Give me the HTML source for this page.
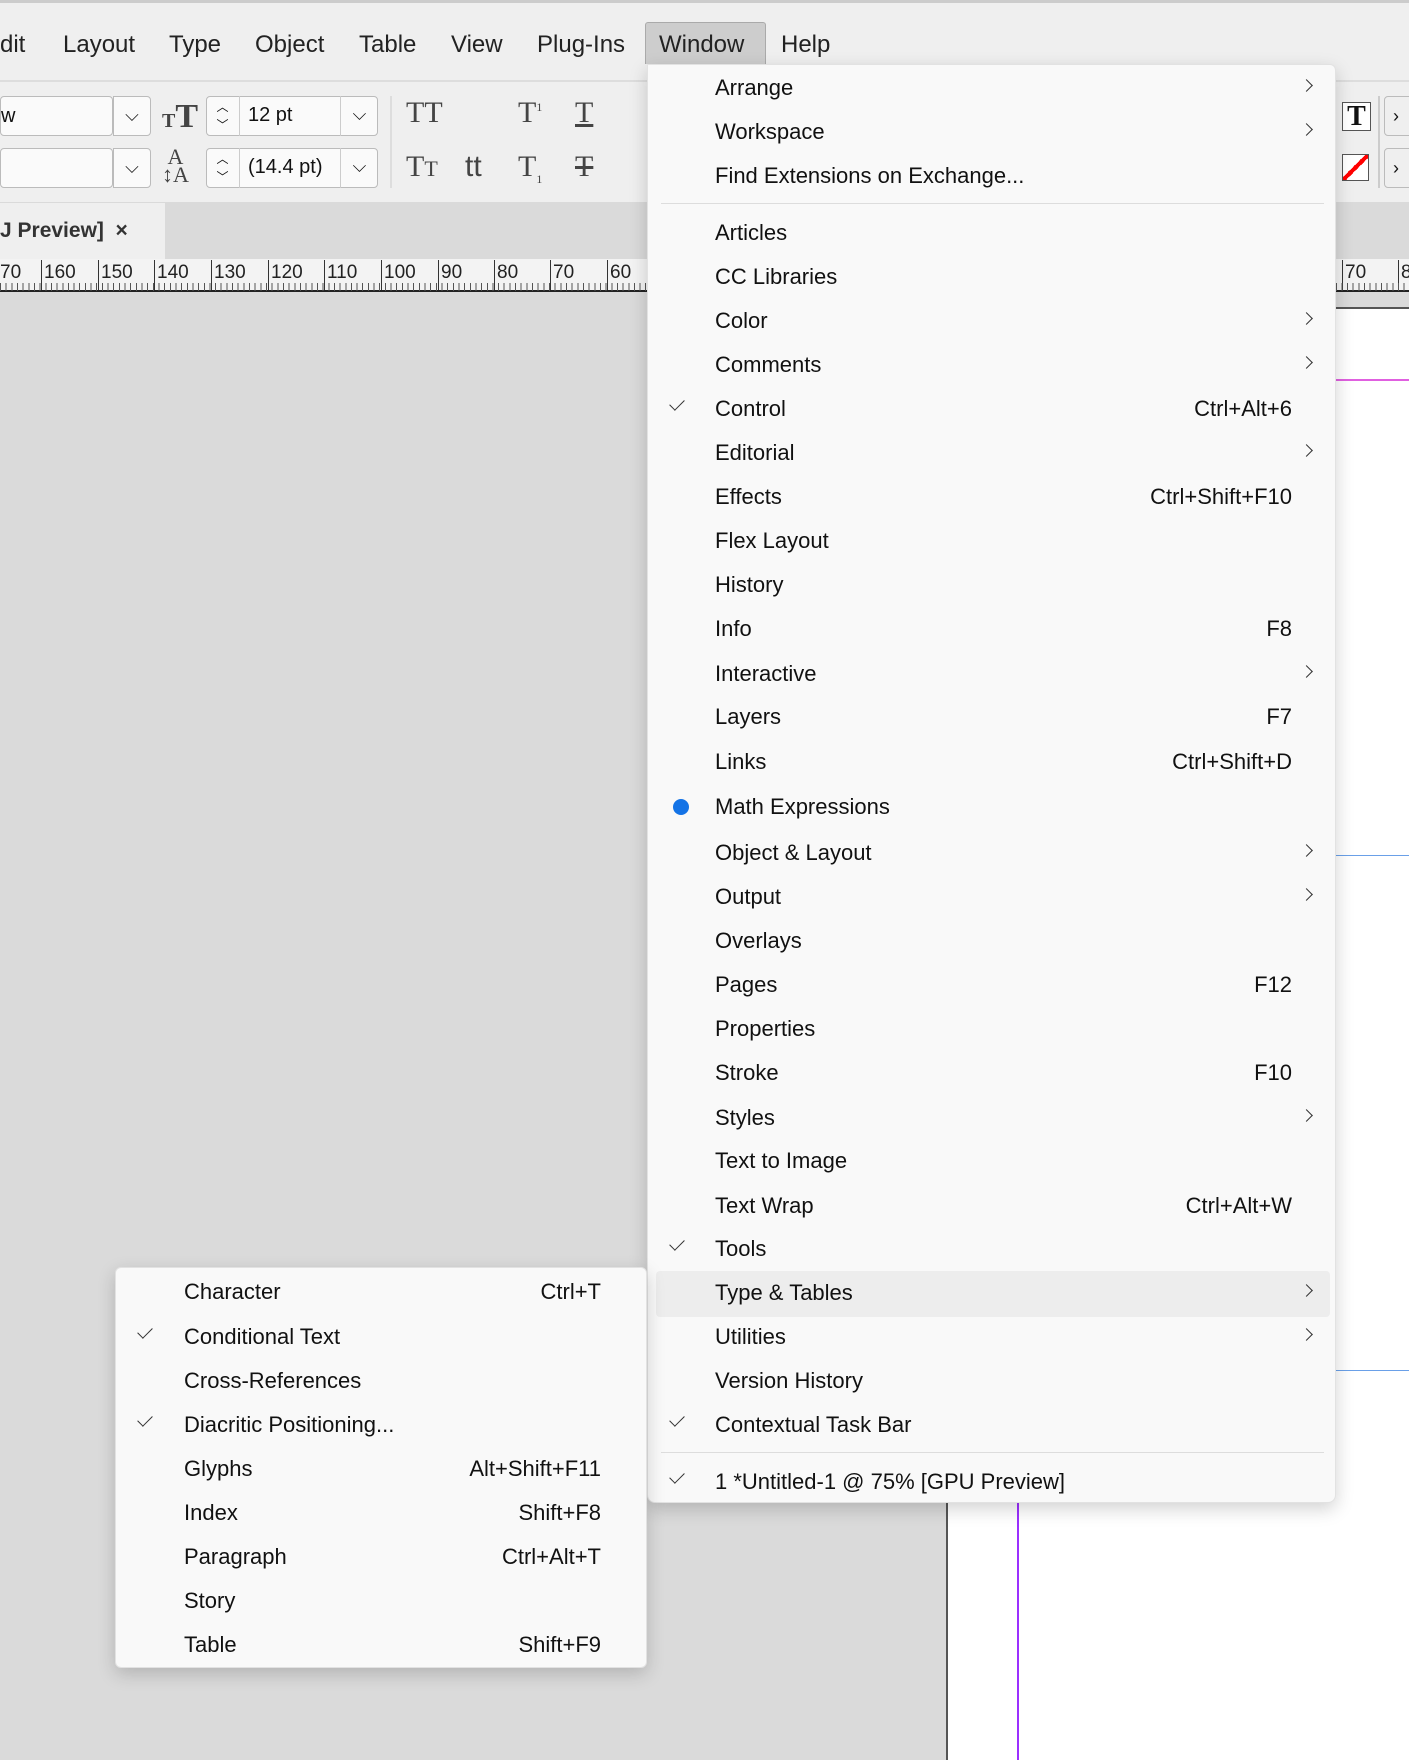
<!DOCTYPE html>
<html><head><meta charset="utf-8"><style>
*{margin:0;padding:0;box-sizing:border-box}
body{width:1409px;height:1749px;position:relative;overflow:hidden;background:#dadada;font-family:"Segoe UI","Liberation Sans",sans-serif;color:#111}
.a{position:absolute}
.mb{font-size:24px;top:31px;color:#222}
.it{position:absolute;left:0;right:0;height:40px;line-height:40px;font-size:22px}
.it .t{position:absolute;left:67px}
.it .s{position:absolute;right:43px}
.it .c{position:absolute;right:24px;top:13px;width:9px;height:9px;border-right:1.6px solid #333;border-top:1.6px solid #333;transform:rotate(45deg)}
.it .k{position:absolute;left:22px;top:10px;width:14px;height:8px;border-left:1.5px solid #333;border-bottom:1.5px solid #333;transform:rotate(-45deg)}
.sub .it .t{left:68px}
.sub .it .s{right:45px}
.sub .it .k{left:22px}
.rn{position:absolute;top:0;font-size:19px;color:#222;border-left:1px solid #333;padding-left:2px;height:30px;line-height:26px}
</style></head><body>
<!-- menubar -->
<div class="a" style="left:0;top:0;width:1409px;height:82px;background:#efefef;border-top:3px solid #ccc"></div>
<div class="a" style="left:645px;top:22px;width:121px;height:42px;background:#cdcdcd;border:1px solid #aaa;border-bottom:none;border-radius:3px 3px 0 0"></div>
<div class="a mb" style="left:0">dit</div>
<div class="a mb" style="left:63px">Layout</div>
<div class="a mb" style="left:169px">Type</div>
<div class="a mb" style="left:255px">Object</div>
<div class="a mb" style="left:359px">Table</div>
<div class="a mb" style="left:451px">View</div>
<div class="a mb" style="left:537px">Plug-Ins</div>
<div class="a mb" style="left:659px">Window</div>
<div class="a mb" style="left:781px">Help</div>
<!-- toolbar -->
<div class="a" style="left:0;top:80px;width:1409px;height:122px;background:#efefef;border-top:2px solid #ddd"></div>
<div class="a" style="left:0;top:96px;width:113px;height:40px;background:#fafafa;border:1px solid #bbb;border-radius:4px;font-size:20px;line-height:38px">w</div>
<div class="a" style="left:113px;top:96px;width:38px;height:40px;border:1px solid #bbb;border-radius:0 4px 4px 0;text-align:center;line-height:36px;font-size:18px;background:#fafafa">⌵</div>
<div class="a" style="left:0;top:148px;width:113px;height:40px;background:#fafafa;border:1px solid #bbb;border-radius:4px"></div>
<div class="a" style="left:113px;top:148px;width:38px;height:40px;border:1px solid #bbb;border-radius:0 4px 4px 0;text-align:center;line-height:36px;font-size:18px;background:#fafafa">⌵</div>
<div class="a" style="left:162px;top:98px;font-family:'Liberation Serif',serif;font-weight:bold;font-size:34px;color:#444"><span style="font-size:20px">T</span>T</div>
<div class="a" style="left:162px;top:148px;font-family:'Liberation Serif',serif;font-size:22px;color:#444;line-height:18px">&nbsp;A<br>↕A</div>
<div class="a" style="left:206px;top:96px;width:172px;height:40px;background:#fafafa;border:1px solid #bbb;border-radius:4px"></div>
<div class="a" style="left:206px;top:96px;width:34px;height:40px;border-right:1px solid #ccc;font-size:12px;text-align:center;line-height:18px;padding-top:2px">︿<br>﹀</div>
<div class="a" style="left:248px;top:104px;font-size:20px">12 pt</div>
<div class="a" style="left:340px;top:96px;width:38px;height:40px;border-left:1px solid #ccc;text-align:center;line-height:36px;font-size:18px">⌵</div>
<div class="a" style="left:206px;top:148px;width:172px;height:40px;background:#fafafa;border:1px solid #bbb;border-radius:4px"></div>
<div class="a" style="left:206px;top:148px;width:34px;height:40px;border-right:1px solid #ccc;font-size:12px;text-align:center;line-height:18px;padding-top:2px">︿<br>﹀</div>
<div class="a" style="left:248px;top:156px;font-size:20px">(14.4 pt)</div>
<div class="a" style="left:340px;top:148px;width:38px;height:40px;border-left:1px solid #ccc;text-align:center;line-height:36px;font-size:18px">⌵</div>
<div class="a" style="left:390px;top:96px;width:2px;height:92px;background:#ddd"></div>
<div class="a" style="left:406px;top:96px;font-family:'Liberation Serif',serif;font-size:30px;color:#444">TT</div>
<div class="a" style="left:518px;top:96px;font-family:'Liberation Serif',serif;font-size:30px;color:#444">T<sup style="font-size:12px">1</sup></div>
<div class="a" style="left:575px;top:96px;font-family:'Liberation Serif',serif;font-size:30px;color:#444;text-decoration:underline">T</div>
<div class="a" style="left:406px;top:150px;font-family:'Liberation Serif',serif;font-size:30px;color:#444">T<span style="font-size:22px">T</span></div>
<div class="a" style="left:465px;top:150px;font-family:'Liberation Sans',sans-serif;font-size:30px;color:#444">tt</div>
<div class="a" style="left:518px;top:150px;font-family:'Liberation Serif',serif;font-size:30px;color:#444">T<sub style="font-size:12px">1</sub></div>
<div class="a" style="left:575px;top:150px;font-family:'Liberation Serif',serif;font-size:30px;color:#444;text-decoration:line-through">T</div>
<div class="a" style="left:1342px;top:102px;width:29px;height:29px;border:1px solid #555;background:#fff;font-family:'Liberation Serif',serif;font-weight:900;font-size:28px;line-height:28px;text-align:center">T</div>
<div class="a" style="left:1342px;top:154px;width:27px;height:27px;border:1px solid #555;background:linear-gradient(135deg,#fff 44%,#f00 44%,#f00 56%,#fff 56%)"></div>
<div class="a" style="left:1378px;top:96px;width:2px;height:92px;background:#ccc"></div>
<div class="a" style="left:1384px;top:96px;width:30px;height:40px;border:1px solid #bbb;border-radius:4px;font-size:18px;line-height:38px;padding-left:8px">›</div>
<div class="a" style="left:1384px;top:148px;width:30px;height:40px;border:1px solid #bbb;border-radius:4px;font-size:18px;line-height:38px;padding-left:8px">›</div>
<!-- tab row -->
<div class="a" style="left:0;top:203px;width:1409px;height:56px;background:#dadada"></div>
<div class="a" style="left:0;top:203px;width:165px;height:56px;background:#efefef;font-size:21px;font-weight:bold;color:#333;line-height:56px">J Preview]&nbsp;&nbsp;×</div>
<!-- ruler -->
<div class="a" style="left:0;top:259px;width:1409px;height:33px;background:#f3f3f3;border-bottom:2px solid #222"></div>
<div class="a" style="left:0;top:260px;width:1409px;height:30px">
<div class="rn" style="left:-2px;border:none">70</div>
<div class="rn" style="left:41px">160</div>
<div class="rn" style="left:98px">150</div>
<div class="rn" style="left:154px">140</div>
<div class="rn" style="left:211px">130</div>
<div class="rn" style="left:268px">120</div>
<div class="rn" style="left:324px">110</div>
<div class="rn" style="left:381px">100</div>
<div class="rn" style="left:438px">90</div>
<div class="rn" style="left:494px">80</div>
<div class="rn" style="left:550px">70</div>
<div class="rn" style="left:607px">60</div>
<div class="rn" style="left:1342px">70</div>
<div class="rn" style="left:1398px">8</div>
</div>
<div class="a" style="left:0;top:283px;width:1409px;height:8px;background:repeating-linear-gradient(90deg,#555 0 1px,transparent 1px 5.66px)"></div>
<!-- page -->
<div class="a" style="left:1336px;top:307px;width:80px;height:1200px;background:#fff;border-top:2px solid #555"></div>
<div class="a" style="left:1336px;top:379px;width:80px;height:2px;background:#e060e0"></div>
<div class="a" style="left:1336px;top:855px;width:80px;height:1px;background:#6aa0e8"></div>
<div class="a" style="left:1336px;top:1370px;width:80px;height:1px;background:#6aa0e8"></div>
<div class="a" style="left:946px;top:1480px;width:470px;height:280px;background:#fff;border-left:2px solid #555"></div>
<div class="a" style="left:1017px;top:1480px;width:2px;height:280px;background:#9b30ff"></div>
<!-- main menu -->
<div class="a" style="left:647px;top:64px;width:689px;height:1439px;background:#f9f9f9;border:1px solid #e2e2e2;border-radius:0 6px 8px 8px;box-shadow:0 6px 18px rgba(0,0,0,.18)">
<div class="a" style="left:13px;top:138px;width:663px;height:1px;background:#ddd"></div>
<div class="a" style="left:13px;top:1387px;width:663px;height:1px;background:#ddd"></div>
<div class="a" style="left:8px;top:1206px;width:674px;height:46px;background:#ededed;border-radius:4px"></div>
<div class="it" style="top:3px"><span class="t">Arrange</span><i class="c"></i></div>
<div class="it" style="top:47px"><span class="t">Workspace</span><i class="c"></i></div>
<div class="it" style="top:91px"><span class="t">Find Extensions on Exchange...</span></div>
<div class="it" style="top:148px"><span class="t">Articles</span></div>
<div class="it" style="top:192px"><span class="t">CC Libraries</span></div>
<div class="it" style="top:236px"><span class="t">Color</span><i class="c"></i></div>
<div class="it" style="top:280px"><span class="t">Comments</span><i class="c"></i></div>
<div class="it" style="top:324px"><i class="k"></i><span class="t">Control</span><span class="s">Ctrl+Alt+6</span></div>
<div class="it" style="top:368px"><span class="t">Editorial</span><i class="c"></i></div>
<div class="it" style="top:412px"><span class="t">Effects</span><span class="s">Ctrl+Shift+F10</span></div>
<div class="it" style="top:456px"><span class="t">Flex Layout</span></div>
<div class="it" style="top:500px"><span class="t">History</span></div>
<div class="it" style="top:544px"><span class="t">Info</span><span class="s">F8</span></div>
<div class="it" style="top:589px"><span class="t">Interactive</span><i class="c"></i></div>
<div class="it" style="top:632px"><span class="t">Layers</span><span class="s">F7</span></div>
<div class="it" style="top:677px"><span class="t">Links</span><span class="s">Ctrl+Shift+D</span></div>
<div class="it" style="top:722px"><i class="a" style="left:25px;top:12px;width:16px;height:16px;border-radius:50%;background:#1473e6"></i><span class="t">Math Expressions</span></div>
<div class="it" style="top:768px"><span class="t">Object &amp; Layout</span><i class="c"></i></div>
<div class="it" style="top:812px"><span class="t">Output</span><i class="c"></i></div>
<div class="it" style="top:856px"><span class="t">Overlays</span></div>
<div class="it" style="top:900px"><span class="t">Pages</span><span class="s">F12</span></div>
<div class="it" style="top:944px"><span class="t">Properties</span></div>
<div class="it" style="top:988px"><span class="t">Stroke</span><span class="s">F10</span></div>
<div class="it" style="top:1033px"><span class="t">Styles</span><i class="c"></i></div>
<div class="it" style="top:1076px"><span class="t">Text to Image</span></div>
<div class="it" style="top:1121px"><span class="t">Text Wrap</span><span class="s">Ctrl+Alt+W</span></div>
<div class="it" style="top:1164px"><i class="k"></i><span class="t">Tools</span></div>
<div class="it" style="top:1208px"><span class="t">Type &amp; Tables</span><i class="c"></i></div>
<div class="it" style="top:1252px"><span class="t">Utilities</span><i class="c"></i></div>
<div class="it" style="top:1296px"><span class="t">Version History</span></div>
<div class="it" style="top:1340px"><i class="k"></i><span class="t">Contextual Task Bar</span></div>
<div class="it" style="top:1397px"><i class="k"></i><span class="t">1 *Untitled-1 @ 75% [GPU Preview]</span></div>
</div>
<!-- submenu -->
<div class="a sub" style="left:115px;top:1267px;width:532px;height:401px;background:#f9f9f9;border:1px solid #e2e2e2;border-radius:6px;box-shadow:0 6px 18px rgba(0,0,0,.18)">
<div class="it" style="top:4px"><span class="t">Character</span><span class="s">Ctrl+T</span></div>
<div class="it" style="top:49px"><i class="k"></i><span class="t">Conditional Text</span></div>
<div class="it" style="top:93px"><span class="t">Cross-References</span></div>
<div class="it" style="top:137px"><i class="k"></i><span class="t">Diacritic Positioning...</span></div>
<div class="it" style="top:181px"><span class="t">Glyphs</span><span class="s">Alt+Shift+F11</span></div>
<div class="it" style="top:225px"><span class="t">Index</span><span class="s">Shift+F8</span></div>
<div class="it" style="top:269px"><span class="t">Paragraph</span><span class="s">Ctrl+Alt+T</span></div>
<div class="it" style="top:313px"><span class="t">Story</span></div>
<div class="it" style="top:357px"><span class="t">Table</span><span class="s">Shift+F9</span></div>
</div>
</body></html>
